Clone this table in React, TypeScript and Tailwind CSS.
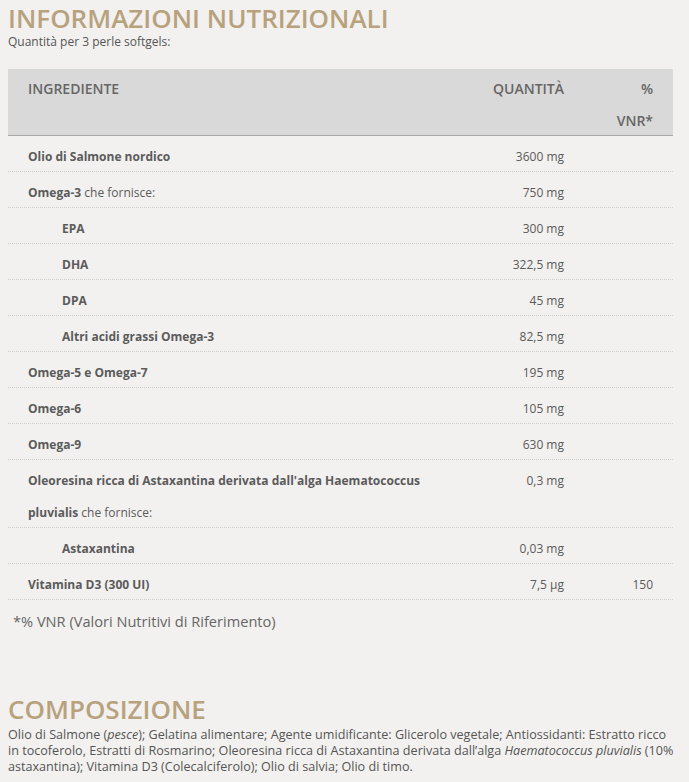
import React from "react";

type Row = {
  name: React.ReactNode;
  qty: string;
  vnr?: string;
  indent?: boolean;
  tall?: boolean;
};

const rows: Row[] = [
  { name: <b>Olio di Salmone nordico</b>, qty: "3600 mg" },
  { name: <><b>Omega-3</b> che fornisce:</>, qty: "750 mg" },
  { name: <b>EPA</b>, qty: "300 mg", indent: true },
  { name: <b>DHA</b>, qty: "322,5 mg", indent: true },
  { name: <b>DPA</b>, qty: "45 mg", indent: true },
  { name: <b>Altri acidi grassi Omega-3</b>, qty: "82,5 mg", indent: true },
  { name: <b>Omega-5 e Omega-7</b>, qty: "195 mg" },
  { name: <b>Omega-6</b>, qty: "105 mg" },
  { name: <b>Omega-9</b>, qty: "630 mg" },
  {
    name: (
      <>
        <b>Oleoresina ricca di Astaxantina derivata dall'alga Haematococcus pluvialis</b> che fornisce:
      </>
    ),
    qty: "0,3 mg",
    tall: true,
  },
  { name: <b>Astaxantina</b>, qty: "0,03 mg", indent: true },
  { name: <b>Vitamina D3 (300 UI)</b>, qty: "7,5 µg", vnr: "150" },
];

export default function App() {
  return (
    <div
      className="min-h-[782px] w-[689px] bg-[#f2f1ef] px-2 pt-[2px] text-[#5b5b5b]"
      style={{ fontFamily: '"Open Sans", "Noto Sans", sans-serif' }}
    >
      <h2 className="text-[26px] leading-[32px] font-semibold text-[#b8a27e]">
        INFORMAZIONI NUTRIZIONALI
      </h2>
      <p className="text-[12px] leading-[16px] text-[#555]">Quantità per 3 perle softgels:</p>

      <div className="mt-[19px] w-[665px]">
        <div className="grid h-[67px] grid-cols-[456px_120px_89px] bg-[#d9d9d9] border-b border-[#a9a9a9] text-[14px] font-semibold text-[#666] leading-[32px] pt-[4px]">
          <div className="px-5">INGREDIENTE</div>
          <div className="px-5 text-right">QUANTITÀ</div>
          <div className="px-5 text-right">
            %
            <br />
            VNR*
          </div>
        </div>
        {rows.map((r, i) => (
          <div
            key={i}
            className={
              (r.tall ? "h-[68px] " : "h-[36px] ") +
              "grid grid-cols-[456px_120px_89px] border-b border-dotted border-[#cfcfcf] text-[12px] leading-[32px] pt-[5px]"
            }
          >
            <div className={r.indent ? "pl-[54px] pr-5" : "px-5"}>{r.name}</div>
            <div className="px-5 text-right">{r.qty}</div>
            <div className="px-5 text-right">{r.vnr ?? ""}</div>
          </div>
        ))}
      </div>

      <p className="mt-[11px] pl-[5px] text-[14.6px] leading-[20px] text-[#666]">
        *% VNR (Valori Nutritivi di Riferimento)
      </p>

      <h2 className="mt-[62px] text-[26px] leading-[32px] font-semibold text-[#b8a27e]">
        COMPOSIZIONE
      </h2>
      <p className="mt-[2px] w-[668px] text-[12.6px] leading-[16px] text-[#555]">
        Olio di Salmone (<i>pesce</i>); Gelatina alimentare; Agente umidificante: Glicerolo vegetale; Antiossidanti:
        Estratto ricco in tocoferolo, Estratti di Rosmarino; Oleoresina ricca di Astaxantina derivata dall’alga{" "}
        <i>Haematococcus pluvialis</i> (10% astaxantina); Vitamina D3 (Colecalciferolo); Olio di salvia; Olio di timo.
      </p>
    </div>
  );
}
